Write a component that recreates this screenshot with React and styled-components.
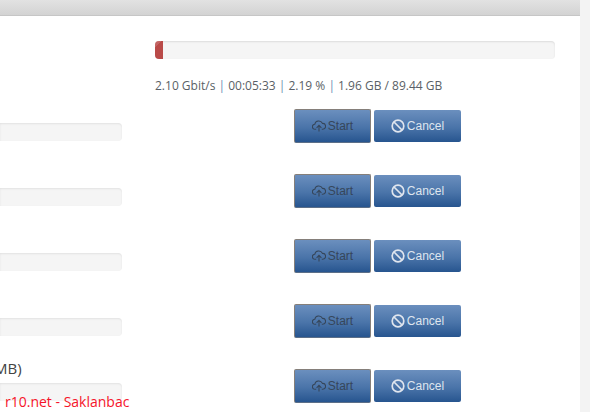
import React from "react";
import styled, { createGlobalStyle } from "styled-components";

const Global = createGlobalStyle`
  html, body { margin: 0; padding: 0; background: #fff; }
  body { width: 590px; height: 412px; overflow: hidden; font-family: "Open Sans", sans-serif; }
`;

const Page = styled.div`
  position: relative;
  display: flex;
  width: 590px;
  height: 412px;
  overflow: hidden;
`;

const Main = styled.div`
  width: 580px;
  flex: none;
`;

const Scrollbar = styled.div`
  flex: 1;
  background: #f3f3f3;
`;

const TopBar = styled.div`
  height: 15px;
  background: linear-gradient(#e2e2e2, #d3d3d3);
  border-bottom: 1px solid #c6c6c6;
`;

const ProgressArea = styled.div`
  padding: 25px 0 0 155px;
`;

const Progress = styled.div`
  width: 400px;
  height: 18px;
  background: #f5f5f5;
  border-radius: 4px;
  box-shadow: inset 0 1px 2px rgba(0, 0, 0, 0.1);
  overflow: hidden;
`;

const ProgressFill = styled.div`
  height: 100%;
  background: #b94a48;
  background-image: linear-gradient(135deg, rgba(255, 255, 255, 0.15) 25%, transparent 25%);
`;

const Stats = styled.div`
  margin-top: 18px;
  height: 18px;
  font-size: 12px;
  line-height: 18px;
  color: #5a5f66;
`;

const Sep = styled.span`
  color: #6d8db0;
`;

const RowList = styled.div`
  margin-top: 14px;
`;

const Row = styled.div`
  display: grid;
  grid-template-columns: 122px 172px auto;
  height: 65px;
  align-items: start;
`;

const Field = styled.div`
  position: relative;
  height: 18px;
  margin-top: 14px;
  background: #f5f5f5;
  border-radius: 0 4px 4px 0;
  box-shadow: inset 0 1px 2px rgba(0, 0, 0, 0.08);
`;

const FieldLabel = styled.span`
  position: absolute;
  left: -6px;
  top: -25px;
  font-size: 15px;
  line-height: 20px;
  color: #444;
`;

const Actions = styled.div`
  display: flex;
  align-items: center;
  gap: 3px;
`;

const Button = styled.div`
  display: flex;
  align-items: center;
  justify-content: center;
  gap: 2px;
  box-sizing: border-box;
  width: ${(p) => (p.$disabled ? "77px" : "87px")};
  height: ${(p) => (p.$disabled ? "34px" : "32px")};
  font-family: "Liberation Sans", sans-serif;
  font-size: 12px;
  color: ${(p) => (p.$disabled ? "#36465a" : "#dfe5ee")};
  background: linear-gradient(#6b8fbe, #4a74a9 55%, #27558f);
  border-radius: 2px;
  border: ${(p) => (p.$disabled ? "1px solid #857f7a" : "none")};
  border-bottom-color: #5c6f88;
`;

const Cloud = () => (
  <svg width="14" height="14" viewBox="0 0 14 14" fill="none" stroke="currentColor" strokeWidth="1.1">
    <path d="M4.2 10.2H3A2.5 2.5 0 0 1 2.8 5.2 4 4 0 0 1 10.4 4.4 2.9 2.9 0 0 1 10.9 10.2H9.8" />
    <path d="M7 12.6V6.6M4.6 8.8 7 6.4l2.4 2.4" />
  </svg>
);

const Ban = () => (
  <svg width="14" height="14" viewBox="0 0 14 14" fill="none" stroke="currentColor" strokeWidth="1.7">
    <circle cx="7" cy="7" r="5.8" />
    <path d="M3 3l8 8" />
  </svg>
);

const Watermark = styled.div`
  position: absolute;
  left: 5px;
  top: 392px;
  font-family: "Open Sans", sans-serif;
  font-size: 14px;
  line-height: 20px;
  color: #f5142a;
  white-space: nowrap;
`;

const rows = [null, null, null, null, "MB)"];

export default function App() {
  return (
    <Page>
      <Global />
      <Main>
        <TopBar />
        <ProgressArea>
          <Progress>
            <ProgressFill style={{ width: "2%" }} />
          </Progress>
          <Stats>
            2.10 Gbit/s <Sep>|</Sep> 00:05:33 <Sep>|</Sep> 2.19 % <Sep>|</Sep> 1.96 GB / 89.44 GB
          </Stats>
        </ProgressArea>
        <RowList>
          {rows.map((label, i) => (
            <Row key={i}>
              <Field>{label && <FieldLabel>{label}</FieldLabel>}</Field>
              <div />
              <Actions>
                <Button $disabled>
                  <Cloud />
                  Start
                </Button>
                <Button>
                  <Ban />
                  Cancel
                </Button>
              </Actions>
            </Row>
          ))}
        </RowList>
      </Main>
      <Scrollbar />
      <Watermark>r10.net - Saklanbac</Watermark>
    </Page>
  );
}
